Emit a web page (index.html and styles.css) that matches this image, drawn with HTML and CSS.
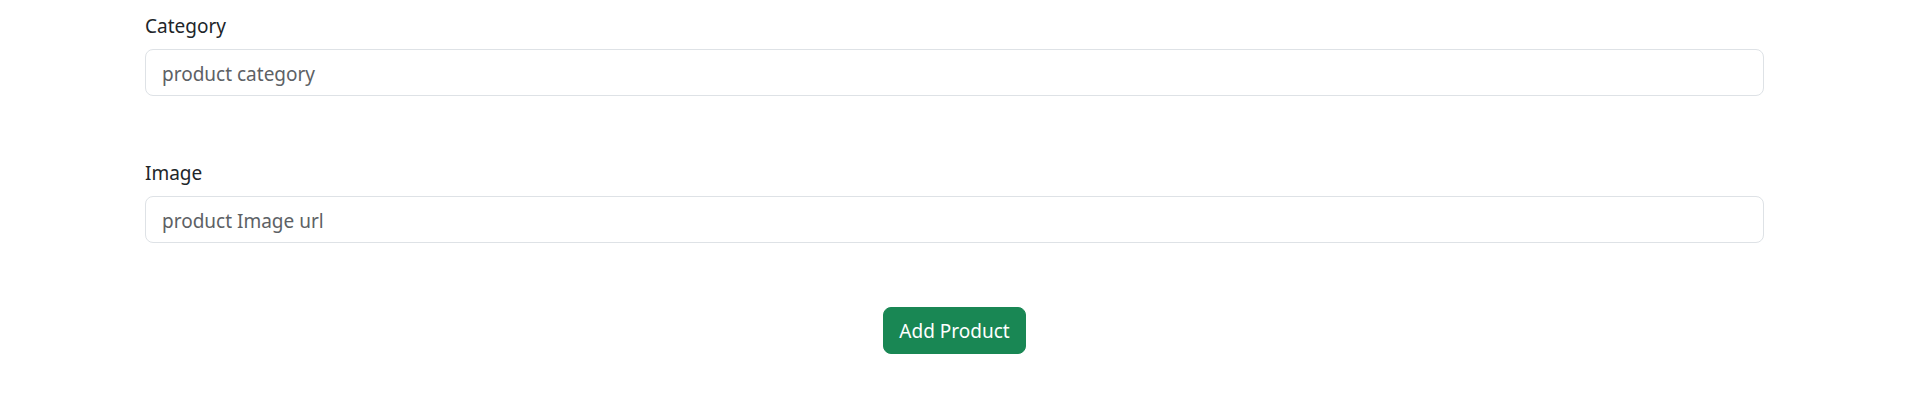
FILE: index.html
```html
<!DOCTYPE html>
<html>
<head>
<meta charset="utf-8">
<link rel="stylesheet" href="styles.css">
</head>
<body>
<form class="form">
  <div class="field">
    <label class="label" for="cat">Category</label>
    <input class="input" id="cat" type="text" placeholder="product category">
  </div>
  <div class="field">
    <label class="label" for="img">Image</label>
    <input class="input" id="img" type="text" placeholder="product Image url">
  </div>
  <div class="actions">
    <button class="btn" type="button">Add Product</button>
  </div>
</form>
</body>
</html>
```
FILE: styles.css
```css
html, body {
  margin: 0;
  padding: 0;
  background: #fff;
}
body {
  font-family: "Noto Sans", "Open Sans", sans-serif;
  color: #212529;
}
.form {
  width: 1619px;
  margin-left: 145px;
  padding-top: 11px;
}
.field {
  margin-bottom: 62px;
}
.label {
  display: block;
  font-size: 19px;
  line-height: 30px;
  margin-bottom: 8px;
}
.input {
  display: block;
  box-sizing: border-box;
  width: 100%;
  height: 47px;
  padding: 9px 16px 7px;
  font-family: inherit;
  font-size: 19px;
  color: #212529;
  border: 1px solid #dee2e6;
  border-radius: 8px;
  outline: none;
}
.input::placeholder {
  color: #5d6165;
  opacity: 1;
}
.actions {
  display: flex;
  justify-content: center;
  padding-top: 2px;
}
.btn {
  height: 47px;
  padding: 1px 15px 0;
  font-family: inherit;
  font-size: 19px;
  color: #fff;
  background: #198754;
  border: 1px solid #198754;
  border-radius: 8px;
}
```
